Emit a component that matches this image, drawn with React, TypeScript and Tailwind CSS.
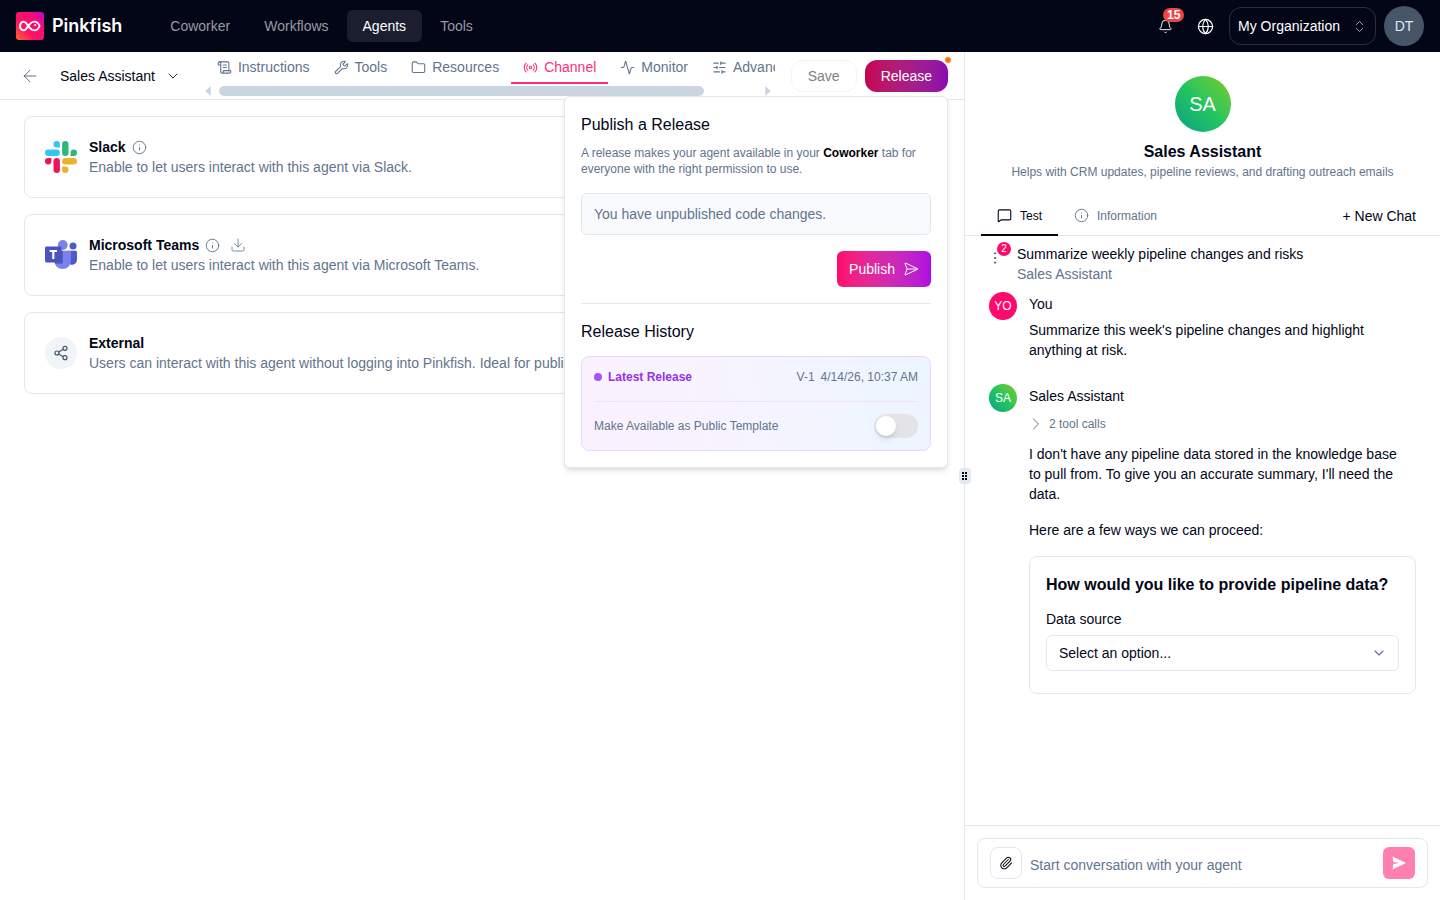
import React from 'react';
import {
  Activity, ArrowLeft, Bell, ChevronDown, ChevronsUpDown, Download, EllipsisVertical,
  Folder, Globe, Info, MessageSquare, Paperclip, Radio, ScrollText, SendHorizontal, Share2, SlidersHorizontal, Wrench,
} from 'lucide-react';

function PinkfishLogo() {
  return (
    <svg viewBox="0 0 28 28" className="size-7 shrink-0" aria-hidden="true">
      <defs>
        <linearGradient id="logoFill" x1="0" y1="1" x2="1" y2="0">
          <stop offset="0" stopColor="#ff6a2b" />
          <stop offset="0.35" stopColor="#ff1464" />
          <stop offset="0.7" stopColor="#fb0a72" />
          <stop offset="1" stopColor="#b80ad8" />
        </linearGradient>
      </defs>
      <rect width="28" height="28" rx="3" fill="url(#logoFill)" />
      <path
        d="M4.800 11.200c1.200-1.900 3.600-2 5.100-.3l3.900 5c1.900 2.400 5 3.100 7.300 1.600 1.100-.8 2-2 2.500-3.500-.5-1.500-1.400-2.700-2.500-3.500-2.300-1.500-5.400-.8-7.300 1.600l-3.900 5c-1.500 1.700-3.900 1.600-5.100-.3-1-1.700-1-3.900 0-5.600z"
        fill="none" stroke="#fff" strokeWidth="1.900" strokeLinejoin="round"
      />
      <circle cx="19.200" cy="12.900" r="1" fill="#fff" />
    </svg>
  );
}

function SlackLogo() {
  return (
    <svg viewBox="0 0 32 32" className="size-8 shrink-0" aria-hidden="true">
      <g fill="#36c5f0">
        <path d="M11.700 0a3.200 3.200 0 1 0 0 6.400h3.200V3.200A3.200 3.200 0 0 0 11.700 0z" />
        <rect y="8.500" width="14.900" height="6.400" rx="3.200" />
      </g>
      <g fill="#2eb67d">
        <path d="M32 11.700a3.200 3.200 0 1 0-6.400 0v3.200h3.200a3.200 3.200 0 0 0 3.200-3.200z" />
        <rect x="17.100" width="6.400" height="14.900" rx="3.200" />
      </g>
      <g fill="#ecb22e">
        <path d="M20.300 32a3.200 3.200 0 1 0 0-6.400h-3.200v3.200a3.200 3.200 0 0 0 3.200 3.200z" />
        <rect x="17.100" y="17.100" width="14.900" height="6.400" rx="3.200" />
      </g>
      <g fill="#e8175d">
        <path d="M0 20.300a3.200 3.200 0 1 0 6.400 0v-3.200H3.200A3.200 3.200 0 0 0 0 20.300z" />
        <rect x="8.500" y="17.100" width="6.400" height="14.900" rx="3.200" />
      </g>
    </svg>
  );
}

function TeamsLogo() {
  return (
    <svg viewBox="0 0 32 32" className="size-8 shrink-0" aria-hidden="true">
      <circle cx="28" cy="7" r="3.500" fill="#5059c9" />
      <path d="M22 11.700h8.600c.8 0 1.400.600 1.400 1.400v7.600a5.300 5.300 0 0 1-10 2.200z" fill="#5059c9" />
      <circle cx="17.800" cy="6" r="4.900" fill="#7b83eb" />
      <path d="M10.500 11.700h14c.8 0 1.400.600 1.400 1.400v8.700a8.300 8.300 0 0 1-16.600 0v-8.700c0-.8.500-1.400 1.200-1.400z" fill="#7b83eb" />
      <path d="M9.300 11.700H18v11.500c0 .9-.7 1.600-1.600 1.600H10a8 8 0 0 1-.7-3z" fill="#3940ab" opacity=".55" />
      <rect y="7.500" width="16.600" height="15.900" rx="1.400" fill="#4b53bc" />
      <path d="M4.600 11h7.400v2H9.400v7H7.200v-7H4.600z" fill="#fff" />
    </svg>
  );
}

const navItems = ['Coworker', 'Workflows', 'Agents', 'Tools'];

function TopBar() {
  return (
    <header className="flex h-13 shrink-0 items-center bg-[#020617] px-4 text-sm text-white">
      <a href="#home" className="flex items-center gap-2 font-['Inter',sans-serif] text-lg font-semibold">
        <PinkfishLogo />
        Pinkfish
      </a>
      <nav className="ml-8 flex gap-0.5" aria-label="Main">
        {navItems.map((item) => (
          <a
            key={item}
            href={`#${item.toLowerCase()}`}
            className={item === 'Agents' ? 'rounded-md bg-[#1b1e2e] px-4 py-1.5' : 'px-4 py-1.5 text-[#999ba2]'}
          >
            {item}
          </a>
        ))}
      </nav>
      <div className="ml-auto flex items-center">
        <button type="button" aria-label="Notifications" className="relative flex size-10 items-center justify-center">
          <Bell className="size-[15px]" strokeWidth={1.5} />
          <span className="absolute top-0.5 left-4.5 h-3.5 rounded-full bg-[#ef4444] px-1 text-xs/3.5 font-bold">15</span>
        </button>
        <button type="button" aria-label="Language" className="flex size-10 items-center justify-center">
          <Globe className="size-[17px]" strokeWidth={1.75} />
        </button>
        <button type="button" className="ml-1 flex h-9.5 items-center gap-3 rounded-xl border border-[#2b2e3c] px-2">
          My Organization
          <ChevronsUpDown className="size-[15px] text-[#a4a6ad]" strokeWidth={1.5} />
        </button>
        <button type="button" className="ml-2 size-10 rounded-full bg-[#475569] text-[#e2e8f0]">DT</button>
      </div>
    </header>
  );
}

const tabs = [
  { label: 'Instructions', icon: ScrollText },
  { label: 'Tools', icon: Wrench },
  { label: 'Resources', icon: Folder },
  { label: 'Channel', icon: Radio },
  { label: 'Monitor', icon: Activity },
  { label: 'Advanced', icon: SlidersHorizontal },
];

function AgentToolbar() {
  return (
    <div className="flex h-12 shrink-0 items-center border-b border-slate-200 pr-4 text-sm">
      <button type="button" aria-label="Back" className="ml-5 text-slate-600">
        <ArrowLeft className="size-5" strokeWidth={1} />
      </button>
      <button type="button" className="ml-5 flex shrink-0 items-center gap-2.5">
        Sales Assistant
        <ChevronDown className="size-4" strokeWidth={1.25} />
      </button>
      <div className="ml-6 flex min-w-0 flex-1 flex-col self-stretch">
        <nav className="flex h-8 overflow-hidden" aria-label="Agent sections">
          {tabs.map(({ label, icon: Icon }) => (
            <a
              key={label}
              href={`#${label.toLowerCase()}`}
              className={
                label === 'Channel'
                  ? 'flex shrink-0 items-center gap-1.5 border-b-2 border-[#ff2d78] px-3 text-[#ff2d78]'
                  : 'flex shrink-0 items-center gap-1.5 border-b-2 border-transparent px-3 text-slate-500'
              }
            >
              <Icon className="size-[15px]" strokeWidth={1.75} />
              {label}
            </a>
          ))}
        </nav>
        <div className="mt-0.5 flex items-center justify-between pr-1" aria-hidden="true">
          <svg viewBox="0 0 5 9" className="h-2.5 w-1.5 fill-[#cbd5e1]"><path d="M5 0v9L0 4.500z" /></svg>
          <div className="mr-auto ml-2 h-2.5 w-6/7 rounded-full bg-[#cbd5e1]" />
          <svg viewBox="0 0 5 9" className="h-2.5 w-1.5 fill-[#cbd5e1]"><path d="M0 0v9l5-4.500z" /></svg>
        </div>
      </div>
      <button type="button" disabled className="ml-4 h-8 rounded-xl border border-[#f1f3f6] px-4 text-[#808080]">Save</button>
      <button type="button" className="relative ml-2 h-8 rounded-xl bg-linear-to-r from-[#c70053] to-[#8c0aae] px-4 text-white">
        Release
        <span className="absolute -top-1 -right-1 size-2 rounded-full border border-white bg-[#f97316]" />
      </button>
    </div>
  );
}

function ReleasePopover() {
  return (
    <section className="absolute top-11 right-4 z-10 w-96 rounded-md border border-slate-200 bg-white p-4 shadow-md">
      <h2 className="text-base/6">Publish a Release</h2>
      <p className="mt-2 text-xs/4 text-slate-500">
        A release makes your agent available in your <b className="font-semibold text-black">Coworker</b> tab for everyone with the right permission to use.
      </p>
      <p className="mt-4 rounded-md border border-slate-200 bg-slate-50 px-3 py-2.5 text-sm text-slate-500">You have unpublished code changes.</p>
      <div className="mt-4 flex justify-end border-b border-slate-200 pb-4">
        <button type="button" className="flex h-9 items-center gap-2 rounded-md bg-linear-to-r from-[#ff0a6c] to-[#b00ae0] px-3 text-sm text-white">
          Publish
          <SendHorizontal className="size-4" strokeWidth={1.5} />
        </button>
      </div>
      <h2 className="mt-4 text-base/6">Release History</h2>
      <div className="mt-3 rounded-lg border border-[#e9d5ff] bg-linear-75 from-[#fbf1fe] via-[#f5f4ff] to-[#ebf5ff] p-3 text-xs/4">
        <div className="flex items-center pb-4 text-slate-500">
          <span className="mr-1.5 size-2 rounded-full bg-[#a855f7]" />
          <span className="font-semibold text-[#9333ea]">Latest Release</span>
          <span className="ml-auto">V-1</span>
          <span className="ml-1.5">4/14/26, 10:37 AM</span>
        </div>
        <label className="flex items-center justify-between border-t border-[#f3e0fb] pt-3 text-slate-500">
          Make Available as Public Template
          <input
            type="checkbox"
            role="switch"
            className="h-6 w-11 appearance-none rounded-full bg-[#e4e4e7] before:m-0.5 before:block before:size-5 before:rounded-full before:bg-white before:shadow-md"
          />
        </label>
      </div>
    </section>
  );
}

function ChannelCard({ logo, title, text, extra }: { logo: React.ReactNode; title: string; text: string; extra?: React.ReactNode }) {
  return (
    <article className="flex h-20.5 items-center gap-3 rounded-lg border border-slate-200 px-5">
      {logo}
      <div className="min-w-0 text-sm">
        <h3 className="flex items-center gap-1.5 font-semibold">
          {title}
          {extra}
        </h3>
        <p className="truncate text-slate-500">{text}</p>
      </div>
    </article>
  );
}

function InfoButton({ title }: { title: string }) {
  return (
    <button type="button" aria-label={`About ${title}`} className="text-slate-500">
      <Info className="size-[15px]" strokeWidth={1.5} />
    </button>
  );
}

function Channels() {
  return (
    <div className="flex flex-col gap-4 px-6 py-4">
      <ChannelCard logo={<SlackLogo />} title="Slack" text="Enable to let users interact with this agent via Slack." extra={<InfoButton title="Slack" />} />
      <ChannelCard
        logo={<TeamsLogo />}
        title="Microsoft Teams"
        text="Enable to let users interact with this agent via Microsoft Teams."
        extra={
          <>
            <InfoButton title="Microsoft Teams" />
            <button type="button" aria-label="Download" className="ml-1 text-slate-500">
              <Download className="size-4" strokeWidth={1.25} />
            </button>
          </>
        }
      />
      <ChannelCard
        logo={<span className="flex size-8 shrink-0 items-center justify-center rounded-full bg-slate-100 text-slate-600"><Share2 className="size-4" strokeWidth={1.75} /></span>}
        title="External"
        text="Users can interact with this agent without logging into Pinkfish. Ideal for public-facing pages."
      />
    </div>
  );
}

function Message({ initials, avatar, name, children }: { initials: string; avatar: string; name: string; children: React.ReactNode }) {
  return (
    <article className="flex gap-3">
      <span className={`flex size-7 shrink-0 items-center justify-center rounded-full text-xs text-white ${avatar}`}>{initials}</span>
      <div className="min-w-0 flex-1 pt-0.5">
        <h3>{name}</h3>
        {children}
      </div>
    </article>
  );
}

function ChatPanel() {
  return (
    <aside className="relative flex w-119 shrink-0 flex-col border-l border-slate-200 text-sm text-[#020617]">
      <button type="button" aria-label="Resize panel" className="absolute top-1/2 -left-1.5 grid h-4 w-3 -translate-y-1/2 place-items-center rounded bg-slate-200">
        <svg viewBox="0 0 6 8" className="h-2 w-1.5 fill-[#020617]"><path d="M0 0h2v2H0zM3 0h2v2H3zM0 3h2v2H0zM3 3h2v2H3zM0 6h2v2H0zM3 6h2v2H3z" /></svg>
      </button>
      <div className="flex flex-col items-center pt-6">
        <span className="flex size-14 items-center justify-center rounded-full bg-linear-to-tr from-[#10a080] via-[#22c55e] to-[#70cc18] text-xl text-white">SA</span>
        <h2 className="mt-2 text-base/6 font-semibold">Sales Assistant</h2>
        <p className="text-xs/4 text-slate-500">Helps with CRM updates, pipeline reviews, and drafting outreach emails</p>
      </div>
      <div className="mt-4 flex h-10 items-center border-b border-slate-200 px-4 text-xs">
        <button type="button" className="flex h-10 items-center gap-2 border-b-2 border-[#020617] px-4 pt-0.5">
          <MessageSquare className="size-[15px]" strokeWidth={1.75} />
          Test
        </button>
        <button type="button" className="flex h-10 items-center gap-2 px-4 text-slate-500">
          <Info className="size-[15px]" strokeWidth={1.5} />
          Information
        </button>
        <button type="button" className="mr-2 ml-auto text-sm">+ New Chat</button>
      </div>
      <div className="flex-1 px-6 pt-2">
        <div className="flex gap-4">
          <button type="button" aria-label="Chat menu" className="relative flex w-3 items-center justify-center self-start pt-1.5 text-slate-600">
            <EllipsisVertical className="size-4 shrink-0" strokeWidth={1.5} />
            <span className="absolute -top-0.5 left-2 size-3.5 rounded-full bg-[#ff0a6c] text-center text-[10px]/3.5 text-white">2</span>
          </button>
          <div>
            <p>Summarize weekly pipeline changes and risks</p>
            <p className="text-slate-500">Sales Assistant</p>
          </div>
        </div>
        <div className="mt-2 flex flex-col gap-6">
          <Message initials="YO" avatar="bg-[#ff0a6c]" name="You">
            <p className="mt-1.5">Summarize this week's pipeline changes and highlight anything at risk.</p>
          </Message>
          <Message initials="SA" avatar="bg-linear-to-tr from-[#10a080] via-[#22c55e] to-[#70cc18]" name="Sales Assistant">
            <button type="button" className="mt-2 flex items-center gap-1.5 text-xs/5 text-slate-500">
              <svg viewBox="0 0 14 14" className="size-3.5 fill-none stroke-current" strokeLinecap="round" strokeLinejoin="round"><path d="M4.500 2l5 5-5 5" /></svg>
              2 tool calls
            </button>
            <p className="mt-2.5 pr-2">I don't have any pipeline data stored in the knowledge base to pull from. To give you an accurate summary, I'll need the data.</p>
            <p className="mt-4">Here are a few ways we can proceed:</p>
            <div className="mt-4 rounded-lg border border-slate-200 p-4 pb-5.5">
              <h4 className="text-base/6 font-semibold">How would you like to provide pipeline data?</h4>
              <label htmlFor="data-source" className="mt-3 block">Data source</label>
              <div className="relative mt-1.5">
                <select id="data-source" className="h-9 w-full appearance-none rounded-md border border-slate-200 bg-white px-3">
                  <option>Select an option...</option>
                </select>
                <ChevronDown className="pointer-events-none absolute top-2.5 right-3 size-4 text-slate-500" strokeWidth={1.75} />
              </div>
            </div>
          </Message>
        </div>
      </div>
      <form className="border-t border-slate-200 p-3">
        <div className="flex items-center gap-2 rounded-lg border border-slate-200 px-3 py-2">
          <button type="button" aria-label="Attach file" className="flex size-8 items-center justify-center rounded-lg border border-slate-200">
            <Paperclip className="size-3.5" strokeWidth={1.75} />
          </button>
          <input aria-label="Message" placeholder="Start conversation with your agent" className="min-w-0 flex-1 pt-1 outline-none placeholder:text-slate-500" />
          <button type="submit" aria-label="Send" className="flex size-8 items-center justify-center rounded-md bg-[#ff80b0]">
            <svg viewBox="0 0 16 16" className="size-4 fill-white"><path d="M1.500 1.500l13.500 6.500-13.500 6.500 1-5.500 6-1-6-1z" /></svg>
          </button>
        </div>
      </form>
    </aside>
  );
}

export default function App() {
  return (
    <div className="flex h-screen flex-col bg-white font-['Liberation_Sans',sans-serif] text-[#020617]">
      <TopBar />
      <div className="flex min-h-0 flex-1">
        <main className="relative flex min-w-0 flex-1 flex-col">
          <AgentToolbar />
          <ReleasePopover />
          <Channels />
        </main>
        <ChatPanel />
      </div>
    </div>
  );
}
